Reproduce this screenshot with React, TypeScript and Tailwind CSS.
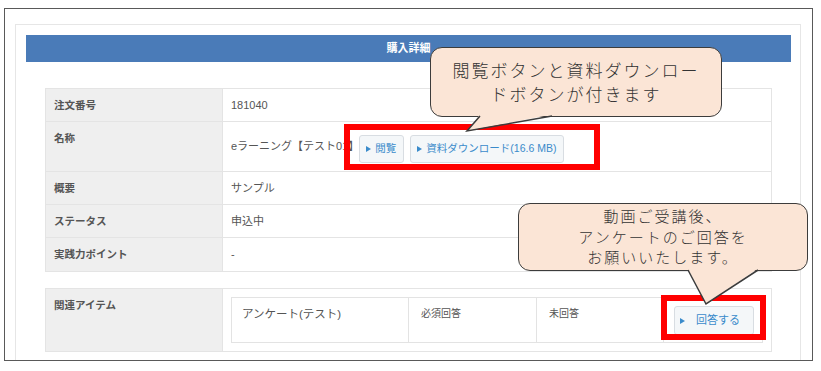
import React from 'react';

const font = { fontFamily: '"Liberation Sans", "Noto Sans CJK JP", sans-serif' };
const bubbleFont = { fontFamily: '"Noto Sans CJK JP", sans-serif', fontWeight: 300 };

const Tri = () => (
  <span className="inline-block w-0 h-0 border-y-[3.5px] border-y-transparent border-l-[5px] border-l-[#3a8bcb]" />
);

const LinkButton = ({ label }: { label: string }) => (
  <button className="flex items-center h-[28px] rounded-[3px] border border-[#d8dde2] bg-[#f4f7f9] pl-[6px] pr-[7px] text-[10.5px] text-[#3a8bcb]">
    <Tri />
    <span className="ml-[4px]">{label}</span>
  </button>
);

const Label = ({ children }: { children: React.ReactNode }) => (
  <div className="w-[177px] shrink-0 border-r border-[#e4e4e4] bg-[#efefef] pl-[8px] pt-[8px] text-[10.5px] font-bold leading-[16px] text-[#555]">
    {children}
  </div>
);

const Row = ({ label, h, children }: { label: string; h: string; children: React.ReactNode }) => (
  <div className={`flex border-b border-[#e4e4e4] ${h}`}>
    <Label>{label}</Label>
    <div className="flex flex-1 items-center pl-[8px] text-[11px] text-[#555]">{children}</div>
  </div>
);

export default function App() {
  return (
    <div className="relative w-[821px] h-[371px] overflow-hidden bg-white" style={font}>
      <div className="ml-[4px] mt-[8px] w-[809px] h-[353px] overflow-hidden border border-[#595959] pl-[10px] pr-[11px] pt-[15px]">
        <div className="h-[400px] border border-[#e6e6e6] pl-[10px] pr-[9px] pt-[10px]">
          <div className="h-[27px] bg-[#4a7bb8] text-center text-[11px] font-bold leading-[27px] text-white">
            購入詳細
          </div>

          <div className="mx-[19px] mt-[26px]">
            <div className="border-x border-t border-[#e4e4e4]">
              <Row label="注文番号" h="h-[33px]">181040</Row>
              <Row label="名称" h="h-[50px]">
                <span>eラーニング【テスト01】</span>
                <div className="mt-[5px] flex gap-[6px]">
                  <LinkButton label="閲覧" />
                  <LinkButton label="資料ダウンロード(16.6 MB)" />
                </div>
              </Row>
              <Row label="概要" h="h-[33px]">サンプル</Row>
              <Row label="ステータス" h="h-[33px]">申込中</Row>
              <Row label="実践力ポイント" h="h-[34px]">-</Row>
            </div>

            <div className="mt-[16px] flex h-[64px] border border-[#e4e4e4]">
              <Label>関連アイテム</Label>
              <div className="flex flex-1 items-center px-[8px]">
                <div className="flex h-[46px] w-full border border-[#e3e3e3] text-[#555]">
                  <div className="w-[177px] border-r border-[#e3e3e3] pl-[10px] pt-[8px] text-[11.5px] leading-[16px]">
                    アンケート(テスト)
                  </div>
                  <div className="w-[128px] border-r border-[#e3e3e3] pl-[12px] pt-[8px] text-[10px] leading-[16px]">
                    必須回答
                  </div>
                  <div className="w-[127px] border-r border-[#e3e3e3] pl-[12px] pt-[8px] text-[10px] leading-[16px]">
                    未回答
                  </div>
                  <div className="flex-1 pl-[10px] pt-[8px]">
                    <button className="flex h-[29px] w-[80px] items-center rounded-[3px] border border-[#d8dde2] bg-[#f4f7f9] pl-[5px] text-[11px] text-[#3a8bcb]">
                      <Tri />
                      <span className="ml-[11px]">回答する</span>
                    </button>
                  </div>
                </div>
              </div>
            </div>
          </div>
        </div>
      </div>

      {/* red highlight frames */}
      <div className="absolute left-[344px] top-[124px] h-[46px] w-[256px] border-[6px] border-[#ff0000]" />
      <div className="absolute left-[661px] top-[295px] h-[45px] w-[105px] border-[6px] border-[#ff0000]" />

      {/* callouts */}
      <div
        className="absolute left-[430px] top-[47px] flex h-[70px] w-[292px] flex-col items-center justify-center rounded-[12px] border-[1.5px] border-[#3c3c3c] bg-[#fbe5d6] text-[17px] leading-[24px] tracking-[2px] text-[#333]"
        style={bubbleFont}
      >
        <div>閲覧ボタンと資料ダウンロー</div>
        <div>ドボタンが付きます</div>
      </div>
      <div
        className="absolute left-[518px] top-[203px] flex h-[68px] w-[290px] flex-col items-center justify-center rounded-[12px] border-[1.5px] border-[#3c3c3c] bg-[#fbe5d6] text-[15px] leading-[20.5px] tracking-[2px] text-[#333]"
        style={bubbleFont}
      >
        <div>動画ご受講後、</div>
        <div>アンケートのご回答を</div>
        <div>お願いいたします。</div>
      </div>

      <svg className="pointer-events-none absolute left-0 top-0" width="821" height="371">
        <polygon points="480,114.5 552,114.5 467,131" fill="#fbe5d6" />
        <polyline points="480,116 467,131 552,116" fill="none" stroke="#3c3c3c" strokeWidth="1.5" />
        <polygon points="688,268.5 758,268.5 706,304" fill="#fbe5d6" />
        <polyline points="688,270 706,304 758,270" fill="none" stroke="#3c3c3c" strokeWidth="1.5" />
      </svg>
    </div>
  );
}
